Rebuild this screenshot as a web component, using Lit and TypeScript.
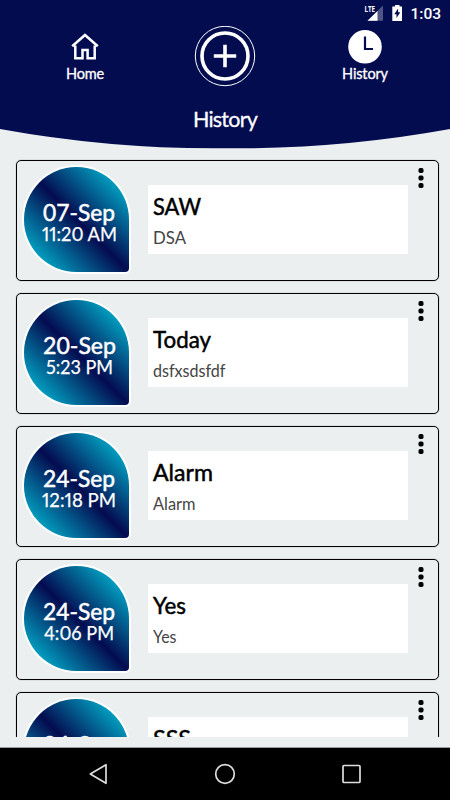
import { LitElement, html, css } from "lit";
import { customElement, property } from "lit/decorators.js";

interface Label {
  text: string;
  width: number;
}

interface Alarm {
  date: Label;
  time: Label;
  title: Label;
  note: Label;
}

const label = (text: string, width: number): Label => ({ text, width });

const ALARMS: Alarm[] = [
  { date: label("07-Sep", 72), time: label("11:20 AM", 75), title: label("SAW", 48), note: label("DSA", 33) },
  { date: label("20-Sep", 73), time: label("5:23 PM", 67), title: label("Today", 58), note: label("dsfxsdsfdf", 72.5) },
  { date: label("24-Sep", 72), time: label("12:18 PM", 74), title: label("Alarm", 60), note: label("Alarm", 42.5) },
  { date: label("24-Sep", 72), time: label("4:06 PM", 70), title: label("Yes", 33), note: label("Yes", 23.5) },
  { date: label("24-Sep", 72), time: label("4:05 PM", 70), title: label("SSS", 38), note: label("SSS", 29) },
];

// One line of text, fitted to the label's width.
const line = (l: Label, cls: string, height: number, baseline: number) => html`
  <svg class=${cls} width=${l.width} height=${height}>
    <text x="0" y=${baseline} textLength=${l.width} lengthAdjust="spacingAndGlyphs">${l.text}</text>
  </svg>
`;

@customElement("alarm-card")
export class AlarmCard extends LitElement {
  @property({ attribute: false }) alarm!: Alarm;

  static styles = css`
    :host {
      display: flex;
      box-sizing: border-box;
      height: 121px;
      flex: none;
      border: 1px solid #000;
      border-radius: 5px;
      box-shadow: 0 0 1px 0 rgba(0, 0, 0, 0.6);
      padding: 5px 0 0 5.5px;
    }
    svg {
      display: block;
      overflow: visible;
      flex: none;
    }
    .drop {
      box-sizing: border-box;
      width: 105px;
      height: 105px;
      flex: none;
      margin: 1px 1.5px 0;
      border-radius: 53px 53px 4px 53px;
      box-shadow: 0 0 0 2px #fff;
      background: linear-gradient(45deg, #00d8ec, #040c50 50%, #00d8ec);
      display: flex;
      flex-direction: column;
      align-items: center;
      padding: 33px 0 0 5.5px;
    }
    .date {
      font-size: 23.5px;
      fill: #fff;
      stroke: #fff;
      stroke-width: 0.5px;
    }
    .time {
      font-size: 20px;
      fill: #fff;
      stroke: #fff;
      stroke-width: 0.25px;
      font-feature-settings: "pnum";
    }
    .panel {
      box-sizing: border-box;
      width: 260px;
      height: 69px;
      margin: 19px 0 0 17px;
      padding: 7px 0 0 5px;
      background: #fff;
    }
    .title {
      font-size: 23.5px;
      fill: #000;
      stroke: #000;
      stroke-width: 0.5px;
    }
    .note {
      font-size: 17px;
      margin-top: 5px;
      fill: #444;
    }
    .more {
      width: 6px;
      height: 22px;
      margin: 1px 0 0 10.5px;
    }
  `;

  render() {
    const a = this.alarm;
    return html`
      <div class="drop">
        ${line(a.date, "date", 21, 21)} ${line(a.time, "time", 20, 20)}
      </div>
      <div class="panel">
        ${line(a.title, "title", 30, 23)} ${line(a.note, "note", 20, 17)}
      </div>
      <svg class="more" viewBox="0 0 6 22">
        <rect x="0.5" y="1" width="5" height="5" rx="1.7" />
        <rect x="0.5" y="8.5" width="5" height="5" rx="1.7" />
        <rect x="0.5" y="16" width="5" height="5" rx="1.7" />
      </svg>
    `;
  }
}

@customElement("app-root")
export class AppRoot extends LitElement {
  static styles = css`
    :host {
      display: flex;
      flex-direction: column;
      width: 450px;
      height: 800px;
      overflow: hidden;
      background: #ebeff0;
      font-family: Lato, "Noto Sans", sans-serif;
    }
    .header {
      position: relative;
      flex: none;
      height: 149px;
      color: #fff;
    }
    .curve {
      position: absolute;
      inset: 0;
      width: 450px;
      height: 149px;
    }
    .status {
      position: relative;
      display: flex;
      justify-content: flex-end;
      height: 26px;
      padding-right: 9px;
      font-family: Roboto, sans-serif;
      font-weight: 500;
      font-size: 15.5px;
      line-height: 28px;
    }
    .signals {
      width: 46px;
      height: 26px;
    }
    .lte {
      font: 700 8.5px "Open Sans", sans-serif;
    }
    .tabs {
      position: relative;
      display: grid;
      grid-template-columns: 170px 110px 170px;
      height: 60px;
    }
    .tab {
      display: flex;
      flex-direction: column;
      align-items: center;
      font-size: 14.5px;
      letter-spacing: -0.15px;
      line-height: 20px;
      -webkit-text-stroke: 0.3px #fff;
    }
    .icon {
      height: 38px;
      flex: none;
    }
    .heading {
      position: relative;
      margin-top: 17.5px;
      text-align: center;
      font-size: 21.5px;
      letter-spacing: -0.75px;
      line-height: 30px;
      -webkit-text-stroke: 0.3px #fff;
    }
    .list {
      flex: none;
      box-sizing: border-box;
      height: 588px;
      overflow: hidden;
      display: flex;
      flex-direction: column;
      gap: 12px;
      padding: 11px 11px 0 16px;
    }
    .nav {
      flex: none;
      margin-top: 10px;
      height: 53px;
      background: #000;
      border-top: 1px solid #999;
      box-sizing: border-box;
    }
  `;

  render() {
    return html`
      <div class="header">
        <svg class="curve" viewBox="0 0 450 149">
          <path d="M0 0H450V129A1200 1200 0 0 1 225 148.3A1200 1200 0 0 1 0 129Z" fill="#040c50" />
        </svg>
        <div class="status">
          <svg class="signals" viewBox="0 0 46 26">
            <path d="M19 5.5V20.7H3.5Z" fill="#fff" fill-opacity="0.3" />
            <path d="M13.5 11V20.7H3.5Z" fill="#fff" />
            <text class="lte" x="0.5" y="11.5" textLength="10.5" lengthAdjust="spacingAndGlyphs" fill="#fff" stroke="#040c50" stroke-width="1.5" paint-order="stroke">LTE</text>
            <path d="M31 5H35.5V6.5H38V21H28.3V6.5H31Z" fill="#fff" />
            <path d="M34.1 8.5L30.3 14.3H32.5V18L36.3 12.2H34.1Z" fill="#040c50" />
          </svg>
          <span>1:03</span>
        </div>
        <div class="tabs">
          <div class="tab">
            <svg class="icon" width="30" viewBox="0 0 30 38">
              <path d="M2.2 20.2L15 9L27.8 20.2M5.3 19.5V32.3H12.5V24.1H17.6V32.3H24.7V19.5" fill="none" stroke="#fff" stroke-width="2.5" />
            </svg>
            <span>Home</span>
          </div>
          <div class="tab">
            <svg width="62" height="62" viewBox="0 0 62 62" fill="none" stroke="#fff">
              <circle cx="31" cy="30" r="29.7" stroke-width="1" />
              <circle cx="31" cy="30" r="23" stroke-width="3.6" />
              <path d="M31 18.8V41.2M19.8 30H42.2" stroke-width="3.6" />
            </svg>
          </div>
          <div class="tab">
            <svg class="icon" width="36" viewBox="0 0 36 38">
              <circle cx="18" cy="20.8" r="16.8" fill="#fff" />
              <path d="M18 10.5V23H26" fill="none" stroke="#040c50" stroke-width="2.2" />
            </svg>
            <span>History</span>
          </div>
        </div>
        <div class="heading">History</div>
      </div>
      <div class="list">${ALARMS.map((a) => html`<alarm-card .alarm=${a}></alarm-card>`)}</div>
      <svg class="nav" width="450" height="53" viewBox="0 0 450 52" fill="none" stroke="#ddd" stroke-width="1.7">
        <path d="M106 16.7V35.3L90.3 26Z" stroke-linejoin="round" />
        <circle cx="225" cy="26" r="9.3" />
        <rect x="343" y="17.5" width="17" height="17" rx="1" />
      </svg>
    `;
  }
}
